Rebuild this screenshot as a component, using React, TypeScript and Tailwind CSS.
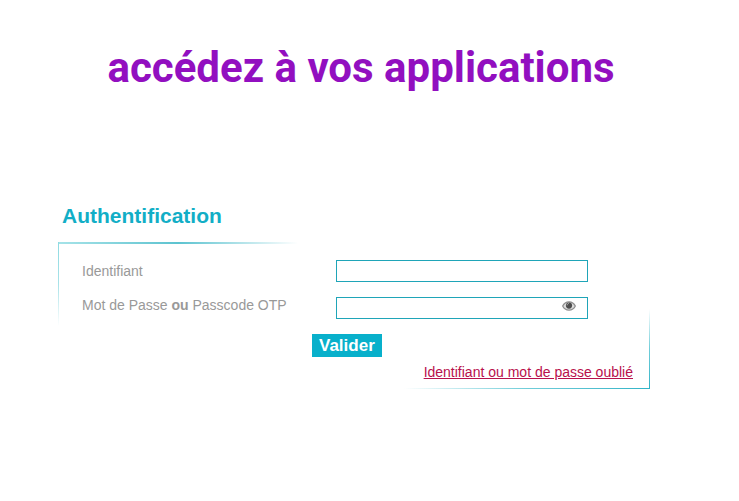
import { useState } from "react";
import type { FormEvent } from "react";

const inputClass =
  "block h-[22px] w-full border border-[#1fa5b8] bg-white pl-1 pr-8 text-sm text-gray-700 outline-none";

const EyeIcon = () => (
  <svg viewBox="0 0 14 10" className="h-[10px] w-[14px]" aria-hidden="true">
    <path
      d="M0.7 5C2.1 2 4.400 0.8 7 0.8s4.900 1.200 6.300 4.200C11.900 8 9.600 9.100 7 9.100S2.100 8 .7 5z"
      fill="#dcdcdc"
      stroke="#8f8f8f"
      strokeWidth="1.300"
    />
    <circle cx="7" cy="4.600" r="3.100" fill="#4d4d4d" />
    <path d="M5.100 4.300C5.200 3.200 5.900 2.500 6.900 2.400" fill="none" stroke="#b5b5b5" strokeWidth="1" />
  </svg>
);

const LoginForm = () => {
  const [username, setUsername] = useState("");
  const [password, setPassword] = useState("");
  const [visible, setVisible] = useState(false);

  const onSubmit = (event: FormEvent) => {
    event.preventDefault();
  };

  return (
    <form onSubmit={onSubmit} className="relative pt-[18px] pb-[7px]">
      {/* Faded lines of the two frame corners */}
      <span className="absolute top-0 left-0 h-[2px] w-[240px] bg-linear-to-r from-[#a5e3e8] via-[#5cc3d0] to-transparent" />
      <span className="absolute top-0 left-0 h-[84px] w-px bg-linear-to-b from-[#8fdbe2] via-[#a8e2e8] to-transparent" />
      <span className="absolute right-0 bottom-0 h-px w-[246px] bg-linear-to-l from-[#2fb4c8] via-[#6fcdd9] to-transparent" />
      <span className="absolute right-0 bottom-0 h-[80px] w-px bg-linear-to-t from-[#2fb4c8] via-[#6fcdd9] to-transparent" />

      <div className="flex pl-6">
        <div className="flex w-[254px] shrink-0 flex-col gap-3 text-sm/[22px] text-[#999999]">
          <label htmlFor="username">Identifiant</label>
          <label htmlFor="password">
            Mot de Passe <b>ou</b> Passcode OTP
          </label>
        </div>
        <div className="flex max-w-[252px] flex-1 flex-col gap-[15px]">
          <input
            id="username"
            type="text"
            value={username}
            onChange={(e) => setUsername(e.target.value)}
            className={inputClass}
          />
          <div className="relative">
            <input
              id="password"
              type={visible ? "text" : "password"}
              value={password}
              onChange={(e) => setPassword(e.target.value)}
              className={inputClass}
            />
            <button
              type="button"
              aria-label="Afficher le mot de passe"
              onClick={() => setVisible(!visible)}
              className="absolute top-1 right-3 flex cursor-pointer"
            >
              <EyeIcon />
            </button>
          </div>
        </div>
      </div>

      <button
        type="submit"
        className="mt-[15px] ml-[254px] block h-[23px] cursor-pointer bg-[#08b0cb] px-[7px] text-[17px]/[23px] font-bold text-white"
      >
        Valider
      </button>

      <p className="mt-[5px] pr-[17px] text-right text-sm/5">
        <a href="#oubli" className="text-[#b8104c] underline">
          Identifiant ou mot de passe oublié
        </a>
      </p>
    </form>
  );
};

const App = () => {
  return (
    <div className="min-h-screen bg-white font-['Liberation_Sans',Arial,sans-serif]">
      <header className="pt-8 pr-[17px]">
        <h1 className="text-center font-[Roboto,sans-serif] text-[42px]/[72px] font-bold text-[#920fc0]">
          accédez à vos applications
        </h1>
      </header>

      <main className="pt-[98px] pr-[89px] pl-[58px]">
        <h2 className="mb-3 pl-1 text-[21px]/[28px] font-bold text-[#12aec6]">Authentification</h2>
        <LoginForm />
      </main>
    </div>
  );
};

export default App;
